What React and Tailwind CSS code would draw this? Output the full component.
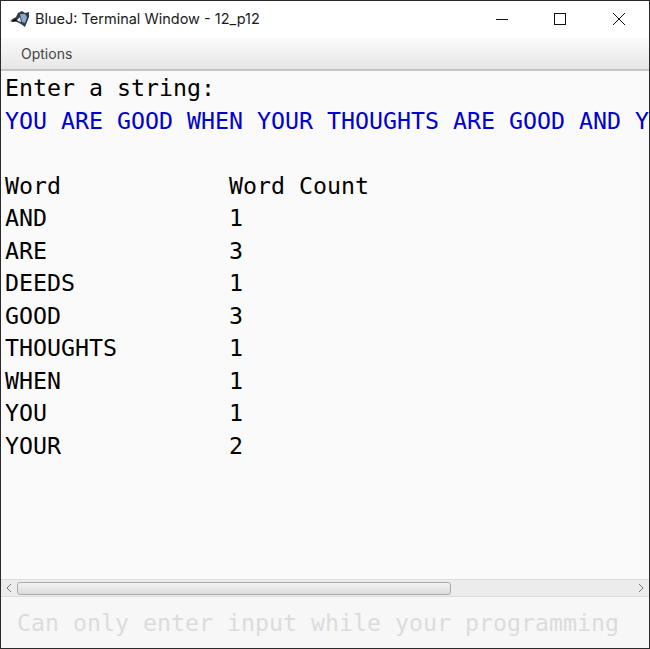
import React from "react";

const mono = "font-['DejaVu_Sans_Mono',monospace]";

const lines = [
  { text: "Enter a string:" },
  { text: "YOU ARE GOOD WHEN YOUR THOUGHTS ARE GOOD AND Y", blue: true },
  { text: " " },
  { text: "Word            Word Count" },
  { text: "AND             1" },
  { text: "ARE             3" },
  { text: "DEEDS           1" },
  { text: "GOOD            3" },
  { text: "THOUGHTS        1" },
  { text: "WHEN            1" },
  { text: "YOU             1" },
  { text: "YOUR            2" },
];

const BlueJIcon = () => (
  <svg width="21" height="18" viewBox="0 0 21 18" className="shrink-0">
    <path d="M1 10 L6 7 L8 3 L12 1 L15 3 L19 2 L19 7 L17 12 L15 17 L11 14 L7 12 Z" fill="#2f3b4f" />
    <path d="M10 4 L15 4 L17 7 L15 13 L12 12 L11 8 Z" fill="#8fa8c8" />
    <path d="M0 11 L6 9 L7 11 L3 12 Z" fill="#0c0c0c" />
    <path d="M7 10 L10 7 L11 12 L8 11 Z" fill="#ececec" />
  </svg>
);

export default function App() {
  return (
    <div className="w-[650px] h-[649px] flex flex-col overflow-hidden border border-[#2a2a2a] bg-white font-['Open_Sans',sans-serif]">
      <div className="h-[37px] shrink-0 bg-white flex items-center pl-[9px] pb-[2px]">
        <BlueJIcon />
        <span className="ml-[4px] text-[14.5px] text-[#1a1a1a] font-['Inter',sans-serif]">BlueJ: Terminal Window - 12_p12</span>
        <div className="ml-auto flex items-center h-full">
          <svg width="14" height="14" viewBox="0 0 14 14" className="mr-[45px]">
            <path d="M2 7.5 H14" stroke="#111" strokeWidth="1" />
          </svg>
          <svg width="14" height="14" viewBox="0 0 14 14" className="mr-[45px]">
            <rect x="1.5" y="1.5" width="11" height="11" fill="none" stroke="#111" strokeWidth="1" />
          </svg>
          <svg width="14" height="14" viewBox="0 0 14 14" className="mr-[23px]">
            <path d="M1 1 L13 13 M13 1 L1 13" stroke="#111" strokeWidth="1" />
          </svg>
        </div>
      </div>

      <div className="h-[33px] shrink-0 flex items-center pl-[20px] bg-gradient-to-b from-[#fbfbfb] to-[#e6e6e6] border-b-2 border-[#c4c4c4] text-[14px] text-[#444] font-['Inter',sans-serif]">
        Options
      </div>

      <div className={`flex-1 min-h-0 overflow-hidden bg-[#fafafa] pl-[4px] pt-[1px] text-[23.25px] leading-[32.5px] whitespace-pre text-black ${mono}`}>
        {lines.map((line, i) => (
          <div key={i} className={line.blue ? "text-[#0000d0]" : ""}>{line.text}</div>
        ))}
      </div>

      <div className="h-[18px] shrink-0 flex items-center bg-[#ececec] border-t border-b border-[#dcdcdc]">
        <svg width="16" height="14" viewBox="0 0 16 14" className="shrink-0">
          <path d="M10 3 L6 7 L10 11" fill="none" stroke="#777" strokeWidth="1" />
        </svg>
        <div className="w-[434px] h-[13px] rounded-[3px] border border-[#aaa] bg-gradient-to-b from-[#f2f2f2] to-[#dcdcdc]" />
        <svg width="16" height="14" viewBox="0 0 16 14" className="shrink-0 ml-auto">
          <path d="M6 3 L10 7 L6 11" fill="none" stroke="#777" strokeWidth="1" />
        </svg>
      </div>

      <div className={`h-[51px] shrink-0 bg-[#f7f7f7] flex items-center pl-[16px] pt-[1px] text-[23.25px] whitespace-pre text-[#dcdcdc] ${mono}`}>
        Can only enter input while your programming
      </div>
    </div>
  );
}
